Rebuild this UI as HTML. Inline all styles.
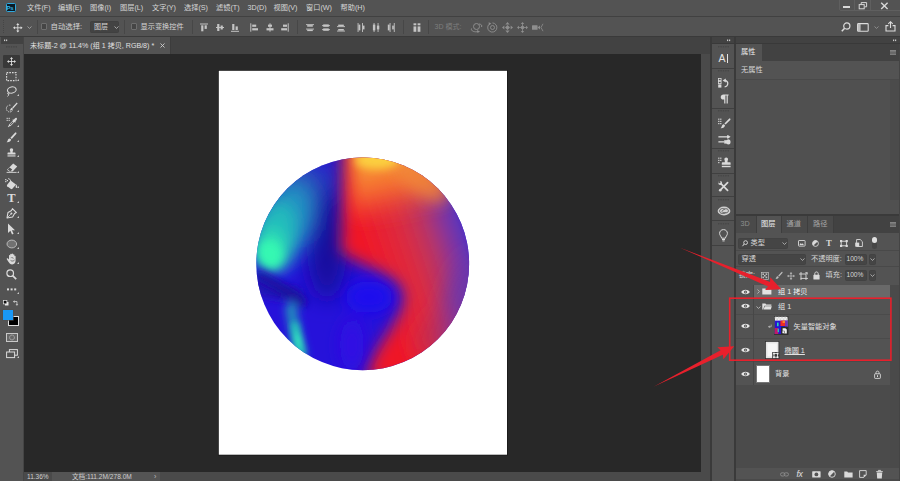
<!DOCTYPE html>
<html><head><meta charset="utf-8"><title>PS</title>
<style>
*{margin:0;padding:0;box-sizing:border-box}
html,body{width:900px;height:481px;overflow:hidden;background:#535353}
body{position:relative;font-family:"Liberation Sans","Noto Sans CJK SC",sans-serif;color:#d6d6d6;font-size:7.6px;line-height:1}
.a{position:absolute}
.t{position:absolute;white-space:nowrap;line-height:10px;height:10px}
svg{position:absolute;overflow:visible}
</style></head><body>
<!-- ===== base regions ===== -->
<div class="a" id="menubar" style="left:0;top:0;width:900px;height:16px;background:#535353"></div>
<div class="a" style="left:0;top:16px;width:900px;height:1px;background:#414141"></div>
<div class="a" id="optbar" style="left:0;top:17px;width:900px;height:19px;background:#535353"></div>
<div class="a" style="left:0;top:36px;width:900px;height:1px;background:#3a3a3a"></div>
<div class="a" id="tabbar" style="left:24px;top:37px;width:688px;height:17px;background:#424242"></div>
<div class="a" id="canvas" style="left:24px;top:54px;width:677px;height:418px;background:#282828"></div>
<div class="a" id="vscroll" style="left:701px;top:54px;width:10px;height:418px;background:#4a4a4a"></div>
<div class="a" id="status" style="left:24px;top:472px;width:688px;height:9px;background:#4a4a4a"></div>
<svg id="doc" style="left:0;top:0" width="900" height="481" viewBox="0 0 900 481"><rect x="218" y="70" width="290" height="385.600" fill="#1b1b1b"/><rect x="218.800" y="70.800" width="288.200" height="383.900" fill="#fff"/></svg>

<div class="a" style="left:0;top:37px;width:24px;height:444px;background:#535353"></div>
<div class="a" style="left:1px;top:37px;width:22px;height:7px;background:#424242"></div>
<div class="a" style="left:23px;top:37px;width:1px;height:444px;background:#454545"></div>
<div class="a" style="left:24px;top:37px;width:146px;height:17px;background:#535353"></div>
<div class="a" style="left:170px;top:37px;width:1px;height:17px;background:#3c3c3c"></div>
<!-- status -->
<div class="a" style="left:24px;top:472px;width:28px;height:9px;background:#4a4a4a"></div>
<div class="a" style="left:52px;top:472px;width:108px;height:9px;background:#545454"></div>
<div class="t" style="left:27px;top:471.700px;font-size:6.5px;color:#cfcfcf">11.36%</div>
<div class="t" style="left:72px;top:471.700px;font-size:6.6px;color:#cfcfcf">文档:111.2M/278.0M</div>
<div class="t" style="left:154px;top:471.500px;font-size:7px;color:#bdbdbd">&#x203A;</div>
<!-- right strips -->
<div class="a" style="left:710px;top:37px;width:2px;height:444px;background:#3a3a3a"></div>
<div class="a" style="left:712px;top:37px;width:22px;height:444px;background:#535353"></div>
<div class="a" style="left:734px;top:37px;width:2px;height:444px;background:#3a3a3a"></div>
<div class="a" style="left:712px;top:37px;width:22px;height:7px;background:#424242"></div>
<div class="a" style="left:736px;top:37px;width:164px;height:7px;background:#424242"></div>

<!-- circle -->
<svg style="left:0;top:0" width="900" height="481" viewBox="0 0 900 481">
<defs>
<clipPath id="cc"><circle cx="362.7" cy="263.8" r="106.4"/></clipPath>
<filter id="b12" x="-50%" y="-50%" width="200%" height="200%"><feGaussianBlur stdDeviation="11"/></filter>
<filter id="b8" x="-50%" y="-50%" width="200%" height="200%"><feGaussianBlur stdDeviation="7.5"/></filter>
<filter id="b5" x="-50%" y="-50%" width="200%" height="200%"><feGaussianBlur stdDeviation="4.5"/></filter>
<filter id="b3" x="-50%" y="-50%" width="200%" height="200%"><feGaussianBlur stdDeviation="3.2"/></filter>
<linearGradient id="rg" gradientUnits="userSpaceOnUse" x1="372" y1="262" x2="474" y2="228">
<stop offset="0" stop-color="#f01828"/><stop offset="0.36" stop-color="#dc2c40"/><stop offset="0.58" stop-color="#b83464"/><stop offset="0.76" stop-color="#8038a0"/><stop offset="0.92" stop-color="#5030c0"/><stop offset="1" stop-color="#4030c8"/>
</linearGradient>
<linearGradient id="og" gradientUnits="userSpaceOnUse" x1="380" y1="158" x2="394" y2="222">
<stop offset="0" stop-color="#f8a034" stop-opacity="1"/><stop offset="0.5" stop-color="#f66c30" stop-opacity="0.9"/><stop offset="1" stop-color="#f04030" stop-opacity="0"/>
</linearGradient>
</defs>
<g clip-path="url(#cc)">
<rect x="250" y="150" width="226" height="228" fill="#2612da"/>
<g filter="url(#b12)">
  <ellipse cx="300" cy="195" rx="36" ry="36" fill="#2c40bc"/>
  <ellipse cx="327" cy="244" rx="20" ry="56" fill="#180e9c"/>
  <ellipse cx="345" cy="168" rx="12" ry="20" fill="#2c1cb4"/>
</g>
<g filter="url(#b12)">
  <ellipse cx="285" cy="222" rx="27" ry="46" fill="#2494c2" transform="rotate(22 285 222)"/>
</g>
<g filter="url(#b8)">
  <ellipse cx="276" cy="234" rx="19" ry="32" fill="#24bcbc" transform="rotate(14 276 234)"/>
  <ellipse cx="272" cy="250" rx="16" ry="21" fill="#2ee0b4" transform="rotate(-10 272 250)"/>
</g>
<g filter="url(#b5)">
  <ellipse cx="270" cy="254" rx="12" ry="14" fill="#34f8b2" transform="rotate(-20 270 254)"/>
  <path d="M246 274L270 286L300 288L304 304L246 294Z" fill="#2216b4"/>
</g>
<g filter="url(#b5)">
  <path d="M260 276C275 284 290 292 302 302" fill="none" stroke="#1a1298" stroke-width="10" stroke-linecap="round" opacity="0.9"/>
  <path d="M291 308C293 322 296 338 301 354" fill="none" stroke="#2090bc" stroke-width="11" stroke-linecap="round"/>
</g>
<g filter="url(#b3)">
  <path d="M295 326C296 334 298 344 301 353" fill="none" stroke="#26c4bc" stroke-width="8" stroke-linecap="round"/>
  <ellipse cx="298.500" cy="341" rx="3.5" ry="9" fill="#34ecc0" transform="rotate(-12 298.500 341)"/>
</g>
<g filter="url(#b8)">
  <path d="M344 140L341 251C350 262 380 267 398 284C411 297 398 319 384 339C376 351 369 362 365 380L480 380L480 140Z" fill="url(#rg)"/>
</g>
<g filter="url(#b12)">
  <ellipse cx="466" cy="305" rx="22" ry="52" fill="#6a36ac" opacity="0.85" transform="rotate(14 466 305)"/>
  <ellipse cx="436" cy="335" rx="16" ry="26" fill="#b42c5c" opacity="0.6" transform="rotate(30 436 335)"/>
</g>
<g filter="url(#b8)">
  <path d="M352 140L450 140L450 222L352 222Z" fill="url(#og)"/>
</g>
<g filter="url(#b8)">
  <ellipse cx="421" cy="181" rx="30" ry="12" fill="#f08a3a" opacity="0.75" transform="rotate(36 421 181)"/>
</g>
<g filter="url(#b5)">
  <ellipse cx="377" cy="160" rx="22" ry="9" fill="#fcd040"/>
</g>
<g filter="url(#b8)">
  <ellipse cx="369" cy="297" rx="24" ry="16" fill="#1a0aee"/>
  <ellipse cx="352" cy="345" rx="12" ry="26" fill="#300ae4"/>
</g>
</g>
</svg>


<!-- menu -->
<div class="a" style="left:5.5px;top:2.7px;width:10px;height:9.6px;background:#0b1a26;border:1px solid #2ea9df;border-radius:1.5px"></div>
<div class="t" style="left:6.6px;top:2.8px;font-size:6px;font-weight:bold;color:#35b4ea;letter-spacing:-0.3px">Ps</div>
<div class="t" style="left:27px;top:3px;font-size:7.2px">文件(F)</div>
<div class="t" style="left:58px;top:3px;font-size:7.2px">编辑(E)</div>
<div class="t" style="left:90px;top:3px;font-size:7.2px">图像(I)</div>
<div class="t" style="left:120px;top:3px;font-size:7.2px">图层(L)</div>
<div class="t" style="left:152px;top:3px;font-size:7.2px">文字(Y)</div>
<div class="t" style="left:184px;top:3px;font-size:7.2px">选择(S)</div>
<div class="t" style="left:216px;top:3px;font-size:7.2px">滤镜(T)</div>
<div class="t" style="left:247.5px;top:3px;font-size:7.2px">3D(D)</div>
<div class="t" style="left:273.5px;top:3px;font-size:7.2px">视图(V)</div>
<div class="t" style="left:306px;top:3px;font-size:7.2px">窗口(W)</div>
<div class="t" style="left:340.5px;top:3px;font-size:7.2px">帮助(H)</div>

<div class="a" style="left:838.5px;top:-1px;width:62px;height:11.5px;border:1px solid #5f5f5f;border-radius:0 0 0 2px"></div>
<div class="a" style="left:854px;top:0;width:1px;height:10px;background:#5f5f5f"></div>
<div class="a" style="left:870px;top:0;width:1px;height:10px;background:#5f5f5f"></div>
<div class="a" style="left:843px;top:6px;width:6.5px;height:1.6px;background:#d8d8d8"></div>
<svg style="left:858px;top:1px" width="12" height="10" viewBox="0 0 12 10"><rect x="1.2" y="3.6" width="5" height="4.2" fill="none" stroke="#d8d8d8" stroke-width="1"/><path d="M3.2 3.4V1.6H8.6V5.8H6.6" fill="none" stroke="#d8d8d8" stroke-width="1"/></svg>
<svg style="left:880px;top:2px" width="9" height="8" viewBox="0 0 9 8"><path d="M1.2 0.8L7.6 7M7.6 0.8L1.2 7" stroke="#d8d8d8" stroke-width="1.4" fill="none"/></svg>


<!-- options bar -->
<svg style="left:2px;top:19px" width="4" height="16" viewBox="0 0 4 16"><g fill="#454545"><rect x="1" y="1" width="1" height="1"/><rect x="1" y="3" width="1" height="1"/><rect x="1" y="5" width="1" height="1"/><rect x="1" y="7" width="1" height="1"/><rect x="1" y="9" width="1" height="1"/><rect x="1" y="11" width="1" height="1"/><rect x="1" y="13" width="1" height="1"/></g></svg>
<svg style="left:13px;top:22.5px" width="9.600" height="9.600" viewBox="0 0 11 11"><g fill="none" stroke="#dcdcdc" stroke-width="1"><path d="M5.5 1.2V9.8M1.2 5.5H9.8"/></g><g fill="#dcdcdc"><path d="M5.5 0L7.3 2.3H3.7Z"/><path d="M5.5 11L7.3 8.7H3.7Z"/><path d="M0 5.5L2.3 3.7V7.3Z"/><path d="M11 5.5L8.7 3.7V7.3Z"/></g></svg>
<svg style="left:27px;top:26px" width="5" height="3" viewBox="0 0 5 3"><path d="M0.5 0.5L2.5 2.4L4.5 0.5" fill="none" stroke="#b0b0b0" stroke-width="0.8"/></svg>
<div class="a" style="left:37px;top:20px;width:1px;height:14px;background:#474747"></div>
<div class="a" style="left:40.5px;top:23px;width:6.5px;height:6.5px;border:1px solid #6e6e6e;border-radius:1px;background:#454545"></div>
<div class="t" style="left:50.5px;top:21.5px;font-size:7.4px">自动选择:</div>
<div class="a" style="left:90px;top:20.5px;width:29px;height:12.5px;background:#434343;border:1px solid #404040;border-radius:1.5px"></div>
<div class="t" style="left:94px;top:22px;font-size:7px">图层</div>
<svg style="left:113.5px;top:26px" width="5" height="3" viewBox="0 0 5 3"><path d="M0.5 0.5L2.5 2.4L4.5 0.5" fill="none" stroke="#c0c0c0" stroke-width="0.8"/></svg>
<div class="a" style="left:124px;top:20px;width:1px;height:14px;background:#474747"></div>
<div class="a" style="left:130.5px;top:23px;width:6.5px;height:6.5px;border:1px solid #6e6e6e;border-radius:1px;background:#454545"></div>
<div class="t" style="left:140.5px;top:21.5px;font-size:7.2px">显示变换控件</div>
<div class="a" style="left:192px;top:20px;width:1px;height:14px;background:#474747"></div>
<div class="a" style="left:297px;top:20px;width:1px;height:14px;background:#474747"></div>
<div class="a" style="left:403px;top:20px;width:1px;height:14px;background:#474747"></div>
<div class="a" style="left:428px;top:20px;width:1px;height:14px;background:#474747"></div>
<svg style="left:200px;top:22.5px" width="8" height="9" viewBox="0 0 8 9"><g fill="#c4c4c4"><rect x="0" y="0.5" width="8" height="1"/><rect x="1.2" y="2.3" width="2.2" height="6"/><rect x="4.6" y="2.3" width="2.2" height="3.6"/></g></svg>
<svg style="left:215.5px;top:22.5px" width="8" height="9" viewBox="0 0 8 9"><g fill="#c4c4c4"><rect x="0" y="4" width="8" height="1"/><rect x="1.2" y="1" width="2.2" height="7"/><rect x="4.6" y="2.5" width="2.2" height="4"/></g></svg>
<svg style="left:230.5px;top:22.5px" width="8" height="9" viewBox="0 0 8 9"><g fill="#c4c4c4"><rect x="0" y="7.8" width="8" height="1"/><rect x="1.2" y="1" width="2.2" height="6"/><rect x="4.6" y="3.4" width="2.2" height="3.6"/></g></svg>
<svg style="left:250px;top:22.5px" width="8" height="9" viewBox="0 0 8 9"><g fill="#c4c4c4"><rect x="0.3" y="0.3" width="1" height="8.4"/><rect x="2.2" y="1.6" width="4" height="2.2"/><rect x="2.2" y="5.2" width="5.8" height="2.2"/></g></svg>
<svg style="left:265.5px;top:22.5px" width="8" height="9" viewBox="0 0 8 9"><g fill="#c4c4c4"><rect x="3.5" y="0.3" width="1" height="8.4"/><rect x="2" y="1.6" width="4" height="2.2"/><rect x="0.5" y="5.2" width="7" height="2.2"/></g></svg>
<svg style="left:280.5px;top:22.5px" width="8" height="9" viewBox="0 0 8 9"><g fill="#c4c4c4"><rect x="6.7" y="0.3" width="1" height="8.4"/><rect x="2" y="1.6" width="4" height="2.2"/><rect x="0.2" y="5.2" width="5.8" height="2.2"/></g></svg>
<svg style="left:306px;top:22.5px" width="8" height="9" viewBox="0 0 8 9"><g fill="#c4c4c4"><rect x="0" y="1.2" width="8" height="0.9"/><rect x="1.2" y="2.1" width="5.6" height="1.6"/><rect x="0" y="5.6" width="8" height="0.9"/><rect x="1.2" y="6.5" width="5.6" height="1.6"/></g></svg>
<svg style="left:321.5px;top:22.5px" width="8" height="9" viewBox="0 0 8 9"><g fill="#c4c4c4"><rect x="0" y="2.2" width="8" height="0.9"/><rect x="1.2" y="1.4" width="5.6" height="2.4"/><rect x="0" y="6.2" width="8" height="0.9"/><rect x="1.2" y="5.4" width="5.6" height="2.4"/></g></svg>
<svg style="left:336.5px;top:22.5px" width="8" height="9" viewBox="0 0 8 9"><g fill="#c4c4c4"><rect x="0" y="3.2" width="8" height="0.9"/><rect x="1.2" y="1.6" width="5.6" height="1.6"/><rect x="0" y="7.6" width="8" height="0.9"/><rect x="1.2" y="6" width="5.6" height="1.6"/></g></svg>
<svg style="left:356.5px;top:22.5px" width="8" height="9" viewBox="0 0 8 9"><g fill="#c4c4c4"><rect x="0.6" y="0" width="0.9" height="9"/><rect x="1.5" y="1.6" width="1.8" height="5.8"/><rect x="5" y="0" width="0.9" height="9"/><rect x="5.9" y="2.6" width="1.6" height="3.8"/></g></svg>
<svg style="left:372px;top:22.5px" width="8" height="9" viewBox="0 0 8 9"><g fill="#c4c4c4"><rect x="1.6" y="0" width="0.9" height="9"/><rect x="0.9" y="1.6" width="2.4" height="5.8"/><rect x="5.6" y="0" width="0.9" height="9"/><rect x="4.9" y="2.6" width="2.4" height="3.8"/></g></svg>
<svg style="left:387px;top:22.5px" width="8" height="9" viewBox="0 0 8 9"><g fill="#c4c4c4"><rect x="2.6" y="0" width="0.9" height="9"/><rect x="0.8" y="1.6" width="1.8" height="5.8"/><rect x="6.8" y="0" width="0.9" height="9"/><rect x="5.2" y="2.6" width="1.6" height="3.8"/></g></svg>
<svg style="left:412.5px;top:22.5px" width="8" height="9" viewBox="0 0 8 9"><g fill="#c4c4c4"><rect x="0.5" y="0.3" width="2.8" height="2"/><rect x="4.6" y="0.3" width="2.8" height="2"/><rect x="0.5" y="3.4" width="2.8" height="5.4"/><rect x="4.6" y="3.4" width="2.8" height="5.4"/></g></svg>

<div class="t" style="left:434.5px;top:22px;font-size:7px;color:#7d7d7d">3D 模式:</div>
<!-- 3d icons -->
<svg style="left:470px;top:21.5px" width="13" height="11" viewBox="0 0 13 11"><g fill="none" stroke="#8e8e8e" stroke-width="1"><circle cx="6.5" cy="4.5" r="3"/><path d="M1.5 6.5C0.5 9 5 10.5 8 9.5M11.5 5C12.5 3.5 11 2 9 2"/></g><path d="M7 8L10 9.5L7.5 11Z" fill="#8e8e8e"/></svg>
<svg style="left:486.5px;top:21.5px" width="11" height="11" viewBox="0 0 11 11"><g fill="none" stroke="#8e8e8e" stroke-width="0.9"><path d="M3 1.5A4.6 4.6 0 1 0 5.5 0.9"/><circle cx="5.5" cy="5.5" r="2"/></g><path d="M1.6 0.2L4.4 1.6L2 3.2Z" fill="#8e8e8e"/></svg>
<svg style="left:501.5px;top:21.5px" width="11" height="11" viewBox="0 0 11 11"><g fill="#8e8e8e"><path d="M5.5 0L7.6 2.4H3.4Z"/><path d="M5.5 11L7.6 8.6H3.4Z"/><path d="M0 5.5L2.4 3.4V7.6Z"/><path d="M11 5.5L8.6 3.4V7.6Z"/><path d="M5.5 3L8 5.5L5.5 8L3 5.5Z"/></g></svg>
<svg style="left:517px;top:21.5px" width="11" height="11" viewBox="0 0 11 11"><g fill="#8e8e8e"><path d="M5.5 0L7.2 2H3.8Z"/><path d="M5.5 11L7.2 9H3.8Z"/><path d="M0 5.5L2 3.8V7.2Z"/><path d="M11 5.5L9 3.8V7.2Z"/><circle cx="5.5" cy="5.5" r="1.8"/><rect x="5.1" y="1.6" width="0.8" height="7.8"/><rect x="1.6" y="5.1" width="7.8" height="0.8"/></g></svg>
<svg style="left:531.5px;top:22.5px" width="12" height="9" viewBox="0 0 12 9"><g fill="#8e8e8e"><rect x="0" y="2.2" width="5.6" height="4.6" rx="0.6"/><path d="M5.6 4.5L8 2.6V6.4Z"/></g><path d="M11 0.8L9 4.5L11 8.2" fill="none" stroke="#8e8e8e" stroke-width="0.8"/></svg>
<!-- right icons -->
<svg style="left:840.5px;top:22px" width="10" height="10" viewBox="0 0 10 10"><circle cx="5.8" cy="4" r="3.1" fill="none" stroke="#dcdcdc" stroke-width="1.2"/><path d="M3.6 6.2L0.8 9.2" stroke="#dcdcdc" stroke-width="1.5"/></svg>
<svg style="left:856.5px;top:23px" width="12" height="9" viewBox="0 0 12 9"><rect x="0.6" y="0.6" width="10.6" height="7.6" rx="0.8" fill="none" stroke="#dcdcdc" stroke-width="1.1"/><rect x="1" y="1" width="2.6" height="7" fill="#bdbdbd"/></svg>
<svg style="left:873.5px;top:26px" width="5" height="3" viewBox="0 0 5 3"><path d="M0.5 0.5L2.5 2.4L4.5 0.5" fill="none" stroke="#9a9a9a" stroke-width="0.8"/></svg>
<svg style="left:884.5px;top:21px" width="11" height="11" viewBox="0 0 11 11"><g fill="none" stroke="#dcdcdc" stroke-width="1.1"><path d="M3.4 4.6H1V10H10V4.6H7.6"/><path d="M5.5 7V1"/><path d="M3.3 2.8L5.5 0.7L7.7 2.8"/></g></svg>


<!-- tab title -->
<div class="t" style="left:30px;top:40.5px;font-size:7.1px;color:#e0e0e0">未标题-2 @ 11.4% (组 1 拷贝, RGB/8) *</div>
<svg style="left:159.5px;top:42.5px" width="5" height="5" viewBox="0 0 5 5"><path d="M0.5 0.5L4.5 4.5M4.5 0.5L0.5 4.5" stroke="#cfcfcf" stroke-width="0.9"/></svg>
<!-- toolbar -->
<svg style="left:4px;top:39px" width="4" height="3" viewBox="0 0 4 3"><g fill="#c8c8c8"><rect x="0" y="0.5" width="1.2" height="1.6"/><rect x="2" y="0.5" width="1.2" height="1.6"/></g></svg>
<svg style="left:6px;top:46px" width="12" height="2" viewBox="0 0 12 2"><g fill="#474747"><rect x="0" y="0" width="1.4" height="1.6"/><rect x="2.4" y="0" width="1.4" height="1.6"/><rect x="4.8" y="0" width="1.4" height="1.6"/><rect x="7.2" y="0" width="1.4" height="1.6"/><rect x="9.6" y="0" width="1.4" height="1.6"/></g></svg>
<div class="a" style="left:3px;top:55px;width:17px;height:13px;background:#383838;border-radius:1px"></div>
<!-- move -->
<svg style="left:6.7px;top:56.8px" width="9" height="9" viewBox="0 0 11 11"><g fill="none" stroke="#dadada" stroke-width="1.1"><path d="M5.5 1.2V9.8M1.2 5.5H9.8"/></g><g fill="#dadada"><path d="M5.5 0L7.4 2.4H3.6Z"/><path d="M5.5 11L7.4 8.6H3.6Z"/><path d="M0 5.5L2.4 3.6V7.4Z"/><path d="M11 5.5L8.6 3.6V7.4Z"/></g></svg>
<!-- marquee -->
<svg style="left:6.2px;top:71.600px" width="11" height="9" viewBox="0 0 11 9"><rect x="0.6" y="0.6" width="9.4" height="8" fill="none" stroke="#dadada" stroke-width="1.1" stroke-dasharray="1.6 1.1"/></svg>
<!-- lasso -->
<svg style="left:6px;top:86.400px" width="11" height="11" viewBox="0 0 11 11"><ellipse cx="5.8" cy="4" rx="4.4" ry="3.1" fill="none" stroke="#dadada" stroke-width="1.1" transform="rotate(-12 5.8 4)"/><path d="M2.4 6.4C1.2 7 1.6 8.6 2.8 8.4C3.6 8.2 3.2 7 2.4 7.2M2.6 8.4C2.8 9.4 2.2 10 1.4 10.4" fill="none" stroke="#dadada" stroke-width="0.9"/></svg>
<!-- quick select -->
<svg style="left:5.5px;top:101.5px" width="12" height="11" viewBox="0 0 12 11"><path d="M4.4 3.2A3.4 3.4 0 1 0 6.6 8.4" fill="none" stroke="#dadada" stroke-width="1" stroke-dasharray="1.4 0.9"/><path d="M10.8 0.6L6.2 5.4L7.2 6.4L11.6 1.4Z" fill="#dadada"/><path d="M5.8 5.8C4.6 6.2 4.6 7.8 3.6 8.4C5.2 8.8 6.8 8 7 6.8Z" fill="#dadada"/></svg>
<!-- eyedropper -->
<svg style="left:5.5px;top:116.5px" width="12" height="11" viewBox="0 0 12 11"><path d="M10.400 0.800C11.300 1.500 11.100 2.500 10.400 3.200L9.300 4.300L9.900 4.900L9.200 5.600L8.500 5L4.600 8.900L3 9.500L2.300 10.200L1.800 9.700L2.500 9L3.100 7.400L7 3.500L6.400 2.900L7.100 2.200L7.700 2.800L8.800 1.600C9.300 1 9.900 0.500 10.400 0.800Z" fill="#dadada"/><path d="M3.800 7.600L6.800 4.600L7.400 5.200L4.400 8.200Z" fill="#535353"/><g fill="#c8c8c8"><rect x="0.6" y="0.800" width="1.200" height="1.200"/><rect x="2.600" y="0.800" width="1.200" height="1.200"/><rect x="0.600" y="2.800" width="1.200" height="1.200"/><rect x="2.600" y="2.800" width="1.200" height="1.200"/></g></svg>
<!-- brush -->
<svg style="left:6px;top:131.5px" width="11" height="11" viewBox="0 0 11 11"><path d="M10 0.4C10.6 0.8 10.6 1.4 10.2 2L5.8 7L4.4 5.8L9 0.8C9.4 0.4 9.8 0.2 10 0.4Z" fill="#dadada"/><path d="M3.8 6.4L5.2 7.6C5 9.4 3 10.4 0.6 10.2C1.8 9.4 1.6 8.4 2 7.6C2.4 6.8 3 6.4 3.8 6.4Z" fill="#dadada"/></svg>
<!-- stamp -->
<svg style="left:6.8px;top:148px" width="9" height="9" viewBox="0 0 11 11"><path d="M5.5 0.4C6.9 0.4 7.7 1.4 7.5 2.6C7.3 3.6 6.7 4.2 6.9 5.4H9.6C10.2 5.4 10.4 5.8 10.4 6.4V8H0.6V6.4C0.6 5.8 0.8 5.4 1.4 5.4H4.1C4.3 4.2 3.7 3.6 3.5 2.6C3.3 1.4 4.1 0.4 5.5 0.4Z" fill="#dadada"/><rect x="0.6" y="9" width="9.8" height="1.4" fill="#dadada"/></svg>
<!-- eraser -->
<svg style="left:5.5px;top:163px" width="12" height="10" viewBox="0 0 12 10"><path d="M7.2 0.6L11.2 3.6L6.6 8.6H3.2L1 6.8Z" fill="#dadada"/><path d="M1.8 6.6L4.4 8.4L6.2 6.4L3.6 4.6Z" fill="#535353"/><path d="M0.6 9.4H10.6" stroke="#dadada" stroke-width="0.9"/></svg>
<!-- bucket -->
<svg style="left:5px;top:177.5px" width="13" height="12" viewBox="0 0 13 12"><path d="M5.6 2.4L11 6.4L7.4 10.8C7 11.2 6.4 11.2 6 11L2.2 8.2C1.8 7.8 1.8 7.4 2 7Z" fill="#dadada"/><path d="M3 0.8C4.2 0.2 5.4 1.6 5.8 3.4" fill="none" stroke="#dadada" stroke-width="0.9"/><path d="M11 6.2C11.8 7.4 12.6 8.4 12.2 9.4C11.8 10.2 10.6 10 10.6 9C10.6 8 10.8 7.2 11 6.2Z" fill="#dadada"/><g fill="#dadada"><rect x="0.2" y="1" width="1.2" height="1.2"/><rect x="0.2" y="3" width="1.2" height="1.2"/><rect x="1.8" y="2" width="1.2" height="1.2"/></g></svg>
<!-- T -->
<div class="t" style="left:7.2px;top:191.600px;font-size:12.5px;line-height:13px;height:13px;font-weight:bold;font-family:'Liberation Serif',serif;color:#dadada">T</div>
<!-- pen -->
<svg style="left:6px;top:207.5px" width="11" height="11" viewBox="0 0 11 11"><path d="M6.4 0.6L10.4 4.6L8.6 5.4L6.6 9L1 10L2 4.4L5.6 2.4Z" fill="none" stroke="#dadada" stroke-width="1.1" stroke-linejoin="round"/><circle cx="5.4" cy="5.6" r="1" fill="#dadada"/><path d="M1.2 9.8L4.8 6.2" stroke="#dadada" stroke-width="0.8"/></svg>
<!-- path select arrow -->
<svg style="left:7px;top:223px" width="9" height="12" viewBox="0 0 9 12"><path d="M1 0.6L8 7.2H4.9L6.6 10.8L5 11.5L3.4 7.8L1 10Z" fill="#dadada"/></svg>
<!-- ellipse -->
<svg style="left:5.5px;top:238.5px" width="12" height="10" viewBox="0 0 12 10"><ellipse cx="5.8" cy="5" rx="4.8" ry="3.9" fill="#717171" stroke="#c2c2c2" stroke-width="0.9"/></svg>
<!-- hand -->
<svg style="left:5.5px;top:253px" width="12" height="12" viewBox="0 0 12 12"><path d="M3 6.4V2.6C3 1.8 4.2 1.8 4.2 2.6V1.4C4.2 0.6 5.6 0.6 5.6 1.4V1C5.6 0.2 7 0.2 7 1V1.8C7 1 8.4 1 8.4 1.8V3.4C8.4 2.6 9.6 2.6 9.6 3.4V7.6C9.6 9.8 8.4 11.4 6.2 11.4C4.4 11.4 3.4 10.4 2.4 8.8L0.8 6.2C0.4 5.4 1.4 4.8 2 5.4Z" fill="#dadada"/><path d="M4 5.2C5 4 7.4 4.2 8.2 5.6C7.2 5 5.2 4.8 4 5.2Z" fill="#535353"/><path d="M4.6 7.4C5.8 8.4 7.6 8.2 8.6 7" fill="none" stroke="#535353" stroke-width="0.8"/></svg>
<!-- zoom -->
<svg style="left:6px;top:268.5px" width="11" height="11" viewBox="0 0 11 11"><circle cx="4.2" cy="4.2" r="3.3" fill="none" stroke="#dadada" stroke-width="1.2"/><path d="M6.6 6.6L10.2 10.2" stroke="#dadada" stroke-width="1.7"/></svg>
<!-- dots -->
<svg style="left:6.5px;top:287.800px" width="10" height="3" viewBox="0 0 10 3"><g fill="#dadada"><rect x="0" y="0.4" width="2" height="2"/><rect x="3.6" y="0.4" width="2" height="2"/><rect x="7.2" y="0.4" width="2" height="2"/></g></svg>
<!-- default colors / swap -->
<svg style="left:2.8px;top:300.200px" width="6.2" height="6.2" viewBox="0 0 7 7"><rect x="2.2" y="2.2" width="4" height="4" fill="#e8e8e8"/><rect x="0.4" y="0.4" width="4" height="4" fill="#111" stroke="#e8e8e8" stroke-width="0.8"/></svg>
<svg style="left:13px;top:300.200px" width="6" height="6" viewBox="0 0 7 7"><path d="M1.4 1.8H4.6V5" fill="none" stroke="#dadada" stroke-width="0.9"/><path d="M0 1.8L1.8 0.2V3.4Z" fill="#dadada"/><path d="M4.6 6.8L3 5H6.2Z" fill="#dadada"/></svg>
<div class="a" style="left:8.300px;top:315.500px;width:10.700px;height:10.500px;background:#000;border:0.8px solid #e0e0e0"></div>
<div class="a" style="left:2.600px;top:310px;width:10.600px;height:10.300px;background:#1a98f6;box-shadow:0 0 0 0.6px #4f4f4f"></div>
<!-- quick mask -->
<svg style="left:5.5px;top:332.5px" width="12" height="9" viewBox="0 0 12 9"><rect x="0.5" y="0.5" width="11" height="8" fill="#676767" stroke="#c8c8c8" stroke-width="1"/><circle cx="6" cy="4.5" r="2.4" fill="none" stroke="#c8c8c8" stroke-width="0.9" stroke-dasharray="1.2 0.7"/></svg>
<!-- screen mode -->
<svg style="left:5.5px;top:348.5px" width="12" height="10" viewBox="0 0 12 10"><rect x="3.4" y="0.6" width="8" height="5.6" fill="#535353" stroke="#dadada" stroke-width="1"/><rect x="0.6" y="3" width="8" height="5.6" fill="#535353" stroke="#dadada" stroke-width="1"/></svg>

<svg style="left:17.3px;top:79.0px" width="2" height="2" viewBox="0 0 2 2"><path d="M2 0V2H0Z" fill="#c8c8c8"/></svg>
<svg style="left:17.3px;top:94.0px" width="2" height="2" viewBox="0 0 2 2"><path d="M2 0V2H0Z" fill="#c8c8c8"/></svg>
<svg style="left:17.3px;top:109.9px" width="2" height="2" viewBox="0 0 2 2"><path d="M2 0V2H0Z" fill="#c8c8c8"/></svg>
<svg style="left:17.3px;top:124.9px" width="2" height="2" viewBox="0 0 2 2"><path d="M2 0V2H0Z" fill="#c8c8c8"/></svg>
<svg style="left:17.3px;top:139.9px" width="2" height="2" viewBox="0 0 2 2"><path d="M2 0V2H0Z" fill="#c8c8c8"/></svg>
<svg style="left:17.3px;top:154.9px" width="2" height="2" viewBox="0 0 2 2"><path d="M2 0V2H0Z" fill="#c8c8c8"/></svg>
<svg style="left:17.3px;top:170.7px" width="2" height="2" viewBox="0 0 2 2"><path d="M2 0V2H0Z" fill="#c8c8c8"/></svg>
<svg style="left:17.3px;top:185.7px" width="2" height="2" viewBox="0 0 2 2"><path d="M2 0V2H0Z" fill="#c8c8c8"/></svg>
<svg style="left:17.3px;top:201.2px" width="2" height="2" viewBox="0 0 2 2"><path d="M2 0V2H0Z" fill="#c8c8c8"/></svg>
<svg style="left:17.3px;top:215.7px" width="2" height="2" viewBox="0 0 2 2"><path d="M2 0V2H0Z" fill="#c8c8c8"/></svg>
<svg style="left:17.3px;top:231.5px" width="2" height="2" viewBox="0 0 2 2"><path d="M2 0V2H0Z" fill="#c8c8c8"/></svg>
<svg style="left:17.3px;top:246.5px" width="2" height="2" viewBox="0 0 2 2"><path d="M2 0V2H0Z" fill="#c8c8c8"/></svg>
<svg style="left:17.3px;top:261.9px" width="2" height="2" viewBox="0 0 2 2"><path d="M2 0V2H0Z" fill="#c8c8c8"/></svg>
<svg style="left:17.3px;top:292.0px" width="2" height="2" viewBox="0 0 2 2"><path d="M2 0V2H0Z" fill="#c8c8c8"/></svg>
<svg style="left:17.3px;top:355.5px" width="2" height="2" viewBox="0 0 2 2"><path d="M2 0V2H0Z" fill="#c8c8c8"/></svg>
<!-- right icon strip -->
<svg style="left:726.5px;top:39px" width="4" height="3" viewBox="0 0 4 3"><g fill="#c8c8c8"><rect x="0" y="0.5" width="1.2" height="1.6"/><rect x="2" y="0.5" width="1.2" height="1.6"/></g></svg>
<svg style="left:892.5px;top:39px" width="4" height="3" viewBox="0 0 4 3"><g fill="#c8c8c8"><rect x="0" y="0.5" width="1.2" height="1.6"/><rect x="2" y="0.5" width="1.2" height="1.6"/></g></svg>
<div class="a" style="left:712px;top:67.5px;width:22px;height:1px;background:#404040"></div>
<div class="a" style="left:712px;top:108px;width:22px;height:1px;background:#404040"></div>
<div class="a" style="left:712px;top:147.5px;width:22px;height:1px;background:#404040"></div>
<div class="a" style="left:712px;top:172.5px;width:22px;height:1px;background:#404040"></div>
<div class="a" style="left:712px;top:196px;width:22px;height:1px;background:#404040"></div>
<div class="a" style="left:712px;top:220px;width:22px;height:1px;background:#404040"></div>
<div class="a" style="left:712px;top:244.5px;width:22px;height:1px;background:#404040"></div>
<svg style="left:717.5px;top:46px" width="12" height="2" viewBox="0 0 12 2"><g fill="#474747"><rect x="0" y="0" width="1.4" height="1.4"/><rect x="2.4" y="0" width="1.4" height="1.4"/><rect x="4.8" y="0" width="1.4" height="1.4"/><rect x="7.2" y="0" width="1.4" height="1.4"/><rect x="9.6" y="0" width="1.4" height="1.4"/></g></svg>
<svg style="left:717.5px;top:70px" width="12" height="2" viewBox="0 0 12 2"><g fill="#474747"><rect x="0" y="0" width="1.4" height="1.4"/><rect x="2.4" y="0" width="1.4" height="1.4"/><rect x="4.8" y="0" width="1.4" height="1.4"/><rect x="7.2" y="0" width="1.4" height="1.4"/><rect x="9.6" y="0" width="1.4" height="1.4"/></g></svg>
<svg style="left:717.5px;top:110px" width="12" height="2" viewBox="0 0 12 2"><g fill="#474747"><rect x="0" y="0" width="1.4" height="1.4"/><rect x="2.4" y="0" width="1.4" height="1.4"/><rect x="4.8" y="0" width="1.4" height="1.4"/><rect x="7.2" y="0" width="1.4" height="1.4"/><rect x="9.6" y="0" width="1.4" height="1.4"/></g></svg>
<svg style="left:717.5px;top:150px" width="12" height="2" viewBox="0 0 12 2"><g fill="#474747"><rect x="0" y="0" width="1.4" height="1.4"/><rect x="2.4" y="0" width="1.4" height="1.4"/><rect x="4.8" y="0" width="1.4" height="1.4"/><rect x="7.2" y="0" width="1.4" height="1.4"/><rect x="9.6" y="0" width="1.4" height="1.4"/></g></svg>
<svg style="left:717.5px;top:175px" width="12" height="2" viewBox="0 0 12 2"><g fill="#474747"><rect x="0" y="0" width="1.4" height="1.4"/><rect x="2.4" y="0" width="1.4" height="1.4"/><rect x="4.8" y="0" width="1.4" height="1.4"/><rect x="7.2" y="0" width="1.4" height="1.4"/><rect x="9.6" y="0" width="1.4" height="1.4"/></g></svg>
<svg style="left:717.5px;top:198.5px" width="12" height="2" viewBox="0 0 12 2"><g fill="#474747"><rect x="0" y="0" width="1.4" height="1.4"/><rect x="2.4" y="0" width="1.4" height="1.4"/><rect x="4.8" y="0" width="1.4" height="1.4"/><rect x="7.2" y="0" width="1.4" height="1.4"/><rect x="9.6" y="0" width="1.4" height="1.4"/></g></svg>
<svg style="left:717.5px;top:222.5px" width="12" height="2" viewBox="0 0 12 2"><g fill="#474747"><rect x="0" y="0" width="1.4" height="1.4"/><rect x="2.4" y="0" width="1.4" height="1.4"/><rect x="4.8" y="0" width="1.4" height="1.4"/><rect x="7.2" y="0" width="1.4" height="1.4"/><rect x="9.6" y="0" width="1.4" height="1.4"/></g></svg>

<div class="t" style="left:718.5px;top:52.5px;font-size:10.5px;line-height:11px;height:11px;color:#e4e4e4">A</div>
<div class="a" style="left:727px;top:53.5px;width:1px;height:9.5px;background:#e4e4e4"></div>
<!-- history -->
<svg style="left:718px;top:77.5px" width="12" height="10" viewBox="0 0 12 10"><g fill="none" stroke="#dadada" stroke-width="0.8"><rect x="0.5" y="0.4" width="2.6" height="2.2"/><rect x="0.5" y="3.4" width="2.6" height="2.2"/></g><rect x="0.2" y="6.4" width="3.2" height="3.2" fill="#dadada"/><path d="M6.6 9C10.6 8 11 3.4 7 2.4" fill="none" stroke="#dadada" stroke-width="1.2"/><path d="M4.6 2.6L7.8 0.4V4.6Z" fill="#dadada"/></svg>
<!-- paragraph -->
<svg style="left:719.5px;top:94px" width="9" height="10" viewBox="0 0 9 10"><path d="M3.6 0.4H8.6V1.6H7.8V9.6H6.6V1.6H5.4V9.6H4.2V5.6H3.6C-0.2 5.6 -0.2 0.4 3.6 0.4Z" fill="#dadada"/></svg>
<!-- brush settings -->
<svg style="left:717.5px;top:117.5px" width="13" height="11" viewBox="0 0 13 11"><g fill="#dadada"><rect x="0.2" y="0.6" width="1.2" height="1.2"/><rect x="0.2" y="2.8" width="1.2" height="1.2"/><rect x="0.2" y="5" width="1.2" height="1.2"/><rect x="2.2" y="0.6" width="1.2" height="1.2"/><rect x="2.2" y="2.8" width="1.2" height="1.2"/><rect x="2.2" y="5" width="1.2" height="1.2"/><path d="M12 0.4C12.6 0.8 12.6 1.4 12.2 2L7.6 6.6L6.4 5.6L11 0.8C11.4 0.4 11.8 0.2 12 0.4Z"/><path d="M5.8 6.2L7 7.2C6.8 9.2 5 10.4 2.6 10.2C3.8 9.4 3.6 8.2 4.2 7.2C4.6 6.6 5.2 6.2 5.8 6.2Z"/></g></svg>
<!-- brushes -->
<svg style="left:717.5px;top:134.5px" width="13" height="10" viewBox="0 0 13 10"><g fill="#dadada"><rect x="0.4" y="1.2" width="9" height="1.3"/><path d="M9 0.2H10.2L12.6 1.8L10.2 3.6H9Z"/><rect x="0.4" y="6.2" width="6" height="1.3"/><path d="M6.2 5.2H9V8.6H6.2Z"/><ellipse cx="10.4" cy="6.9" rx="2.2" ry="2.6"/></g></svg>
<!-- clone source -->
<svg style="left:717.5px;top:157px" width="13" height="11" viewBox="0 0 13 11"><g fill="#dadada"><rect x="0.2" y="0.6" width="1.2" height="1.2"/><rect x="0.2" y="2.8" width="1.2" height="1.2"/><rect x="0.2" y="5" width="1.2" height="1.2"/><rect x="2.2" y="0.6" width="1.2" height="1.2"/><rect x="2.2" y="2.8" width="1.2" height="1.2"/><path d="M8.2 0.4C9.6 0.4 10.2 1.4 10 2.4C9.8 3.4 9.4 4 9.6 5.2H11.8C12.4 5.2 12.6 5.6 12.6 6.2V7.8H3.8V6.2C3.8 5.6 4 5.2 4.6 5.2H6.8C7 4 6.6 3.4 6.4 2.4C6.2 1.4 6.8 0.4 8.2 0.4Z"/><rect x="3.8" y="8.8" width="8.8" height="1.4"/></g></svg>
<!-- tools (wrench cross) -->
<svg style="left:717.5px;top:181px" width="12" height="11" viewBox="0 0 12 11"><g stroke="#dadada" stroke-width="1.7" stroke-linecap="round"><path d="M2.4 2.2L9.6 9.4"/><path d="M9.6 1.6L2.2 9.2"/></g><circle cx="2.2" cy="2" r="1.9" fill="#dadada"/><circle cx="1.4" cy="1.2" r="1.1" fill="#535353"/><circle cx="2.2" cy="9.2" r="1.3" fill="#dadada"/></svg>
<!-- CC -->
<svg style="left:717px;top:205.5px" width="14" height="10" viewBox="0 0 14 10"><ellipse cx="7" cy="5" rx="6.4" ry="4.4" fill="#cfcfcf"/><g fill="none" stroke="#535353" stroke-width="0.9"><path d="M8.6 6.6C5.8 8.6 2.4 7.2 2.6 4.8C2.8 2.6 6 1.8 8 3.4"/><path d="M5.4 6.2C7 7.2 11.400000000000001 7.4 11.4 4.8C11.4 2.8 8.6 2 6.8 3.6L4.6 5.6"/></g></svg>
<!-- bulb -->
<svg style="left:719px;top:228.500px" width="9" height="13" viewBox="0 0 9 13"><path d="M4.5 0.6C7 0.6 8.4 2.4 8.4 4.4C8.4 6.4 6.6 7.4 6.4 9.200000000000001H2.6C2.4 7.4 0.6 6.4 0.6 4.4C0.6 2.4 2 0.6 4.5 0.6Z" fill="none" stroke="#dadada" stroke-width="1"/><rect x="3" y="10" width="3" height="1" fill="#dadada"/><rect x="3.4" y="11.4" width="2.2" height="1" fill="#dadada"/></svg>

<!-- properties -->
<div class="a" style="left:736px;top:44px;width:164px;height:17px;background:#424242"></div>
<div class="a" style="left:736px;top:44px;width:25.5px;height:17px;background:#535353"></div>
<div class="t" style="left:741px;top:47px;font-size:7.2px;color:#ededed">属性</div>
<svg style="left:889.5px;top:50px" width="6" height="5" viewBox="0 0 6 5"><g fill="#8c8c8c"><rect y="0" width="6" height="0.9"/><rect y="1.3" width="6" height="0.9"/><rect y="2.6" width="6" height="0.9"/><rect y="3.9" width="6" height="0.9"/></g></svg>
<div class="a" style="left:736px;top:61px;width:164px;height:153px;background:#535353"></div>
<div class="t" style="left:741px;top:65px;font-size:7.2px;color:#d8d8d8">无属性</div>
<div class="a" style="left:736px;top:79px;width:164px;height:1px;background:#494949"></div>
<div class="a" style="left:736px;top:80px;width:164px;height:134px;background:#505050"></div>
<div class="a" style="left:890px;top:80px;width:9px;height:120px;background:#4b4b4b"></div>
<div class="a" style="left:736px;top:214px;width:164px;height:2px;background:#3a3a3a"></div>

<!-- layers -->
<div class="a" style="left:736px;top:216px;width:164px;height:16.5px;background:#424242"></div>
<div class="a" style="left:736px;top:216px;width:97px;height:16.5px;background:#4a4a4a"></div>
<div class="a" style="left:756px;top:216px;width:25px;height:16.5px;background:#535353"></div>
<div class="a" style="left:755.5px;top:216px;width:0.8px;height:16.5px;background:#3e3e3e"></div>
<div class="a" style="left:781px;top:216px;width:0.8px;height:16.5px;background:#3e3e3e"></div>
<div class="a" style="left:807px;top:216px;width:0.8px;height:16.5px;background:#3e3e3e"></div>
<div class="a" style="left:833px;top:216px;width:0.8px;height:16.5px;background:#3e3e3e"></div>
<div class="t" style="left:740.5px;top:219px;font-size:7.2px;color:#8f8f8f">3D</div>
<div class="t" style="left:761px;top:219px;font-size:7.2px;color:#f0f0f0">图层</div>
<div class="t" style="left:786.5px;top:219px;font-size:7.2px;color:#a6a6a6">通道</div>
<div class="t" style="left:813px;top:219px;font-size:7.2px;color:#a6a6a6">路径</div>
<svg style="left:889.5px;top:221.5px" width="6" height="5" viewBox="0 0 6 5"><g fill="#8c8c8c"><rect y="0" width="6" height="0.9"/><rect y="1.3" width="6" height="0.9"/><rect y="2.6" width="6" height="0.9"/><rect y="3.9" width="6" height="0.9"/></g></svg>
<div class="a" style="left:736px;top:232.500px;width:164px;height:52px;background:#535353"></div>
<div class="a" style="left:736px;top:250px;width:163px;height:1px;background:#494949"></div>
<div class="a" style="left:736px;top:266px;width:163px;height:1px;background:#494949"></div>
<!-- filter row -->
<div class="a" style="left:738px;top:237.500px;width:49.5px;height:11.5px;background:#454545;border:1px solid #424242;border-radius:1.5px"></div>
<svg style="left:741.5px;top:240px" width="6" height="7" viewBox="0 0 6 7"><circle cx="3.6" cy="2.6" r="1.9" fill="none" stroke="#dadada" stroke-width="0.9"/><path d="M2.2 4L0.5 6.2" stroke="#dadada" stroke-width="1"/></svg>
<div class="t" style="left:750.5px;top:238.200px;font-size:7.2px">类型</div>
<svg style="left:781.5px;top:242.3px" width="5" height="3" viewBox="0 0 5 3"><path d="M0.5 0.5L2.5 2.4L4.5 0.5" fill="none" stroke="#c0c0c0" stroke-width="0.8"/></svg>

<svg style="left:798px;top:239.500px" width="8" height="7" viewBox="0 0 8 7"><rect x="0.5" y="0.5" width="6.6" height="5.6" rx="0.6" fill="none" stroke="#dadada" stroke-width="0.9"/><path d="M1.4 5L2.8 3L3.8 4.2L4.8 3.2L5.8 5Z" fill="#dadada"/></svg>
<svg style="left:812px;top:239.500px" width="7" height="7" viewBox="0 0 7 7"><circle cx="3.5" cy="3.5" r="2.9" fill="none" stroke="#dadada" stroke-width="0.9"/><path d="M5.6 1.4A2.9 2.9 0 0 0 1.4 5.6Z" fill="#dadada"/></svg>
<div class="t" style="left:826px;top:238px;font-size:8.6px;line-height:10px;font-family:'Liberation Serif',serif;font-weight:bold;color:#dadada">T</div>
<svg style="left:839.5px;top:239.500px" width="8" height="7" viewBox="0 0 8 7"><rect x="1.2" y="1.2" width="5.4" height="4.6" fill="none" stroke="#dadada" stroke-width="0.9"/><g fill="#dadada"><rect x="0" y="0" width="2.2" height="2.2"/><rect x="5.6" y="0" width="2.2" height="2.2"/><rect x="0" y="4.800000000000001" width="2.2" height="2.2"/><rect x="5.6" y="4.800000000000001" width="2.2" height="2.2"/></g></svg>
<svg style="left:854.5px;top:239px" width="8" height="8" viewBox="0 0 8 8"><path d="M1.6 0.5H5.2L7.4 2.7V7.5H1.6Z" fill="none" stroke="#dadada" stroke-width="0.9"/><rect x="0.2" y="3.6" width="4" height="4" fill="#dadada"/></svg>
<div class="a" style="left:871.5px;top:238px;width:5.5px;height:10.5px;border-radius:2.8px;background:#464646"></div>
<div class="a" style="left:871.5px;top:237.300px;width:5.5px;height:5.5px;border-radius:3px;background:#e0e0e0"></div>
<!-- blend row -->
<div class="a" style="left:738px;top:253.500px;width:67.5px;height:11px;background:#454545;border:1px solid #424242;border-radius:1.5px"></div>
<div class="t" style="left:741.5px;top:254px;font-size:7.2px">穿透</div>
<svg style="left:799.5px;top:258px" width="5" height="3" viewBox="0 0 5 3"><path d="M0.5 0.5L2.5 2.4L4.5 0.5" fill="none" stroke="#c0c0c0" stroke-width="0.8"/></svg>

<div class="t" style="left:811px;top:254px;font-size:7.2px">不透明度:</div>
<div class="a" style="left:844.5px;top:253.500px;width:22.5px;height:11px;background:#454545;border:1px solid #424242;border-radius:1.5px"></div>
<div class="t" style="left:846.5px;top:254.300px;font-size:6.6px">100%</div>
<div class="a" style="left:868.5px;top:253.500px;width:7.5px;height:11px;background:#454545;border:1px solid #424242;border-radius:1.5px"></div>
<svg style="left:869.8px;top:258px" width="5" height="3" viewBox="0 0 5 3"><path d="M0.5 0.5L2.5 2.4L4.5 0.5" fill="none" stroke="#c0c0c0" stroke-width="0.8"/></svg>

<!-- lock row -->
<div class="t" style="left:738.5px;top:270px;font-size:7.2px">锁定:</div>
<svg style="left:761px;top:272px" width="8" height="8" viewBox="0 0 8 8"><rect x="0.4" y="0.4" width="7" height="7" fill="none" stroke="#bdbdbd" stroke-width="0.7"/><g fill="#bdbdbd"><rect x="1.4" y="1.4" width="1.6" height="1.6"/><rect x="4.6" y="1.4" width="1.6" height="1.6"/><rect x="3" y="3" width="1.6" height="1.6"/><rect x="1.4" y="4.6" width="1.6" height="1.6"/><rect x="4.6" y="4.6" width="1.6" height="1.6"/></g></svg>
<svg style="left:774.5px;top:271px" width="8" height="9" viewBox="0 0 11 11"><path d="M10 0.4C10.6 0.8 10.6 1.4 10.2 2L5.8 7L4.4 5.8L9 0.8C9.4 0.4 9.8 0.2 10 0.4Z" fill="#bdbdbd"/><path d="M3.8 6.4L5.2 7.6C5 9.4 3 10.4 0.6 10.2C1.8 9.4 1.6 8.4 2 7.6C2.400000000000002 6.8 3 6.4 3.8 6.4Z" fill="#bdbdbd"/></svg>
<svg style="left:787px;top:272px" width="8" height="8" viewBox="0 0 11 11"><g fill="none" stroke="#bdbdbd" stroke-width="1"><path d="M5.5 1.2V9.8M1.2 5.5H9.8"/></g><g fill="#bdbdbd"><path d="M5.5 0L7.3 2.3H3.7Z"/><path d="M5.5 11L7.3 8.7H3.7Z"/><path d="M0 5.5L2.3 3.7V7.3Z"/><path d="M11 5.5L8.7 3.7V7.3Z"/></g></svg>
<svg style="left:798.5px;top:271.500px" width="9" height="8" viewBox="0 0 9 8"><g fill="none" stroke="#dadada" stroke-width="0.9"><path d="M2 0V8M0 2H7M7 1.6V8M1.6 6.4H9"/></g><path d="M6 0.2L8.6 0.2L8.6 2.8Z" fill="#dadada"/></svg>
<svg style="left:813px;top:271px" width="7" height="9" viewBox="0 0 7 9"><path d="M1.8 4V2.6C1.8 0.4 5.2 0.4 5.2 2.6V4" fill="none" stroke="#dadada" stroke-width="1"/><rect x="0.4" y="3.8" width="6.2" height="4.8" rx="0.6" fill="#dadada"/></svg>
<div class="t" style="left:825.5px;top:270px;font-size:7.2px">填充:</div>
<div class="a" style="left:844.5px;top:269.500px;width:22.5px;height:11px;background:#454545;border:1px solid #424242;border-radius:1.5px"></div>
<div class="t" style="left:846.5px;top:270.300px;font-size:6.6px">100%</div>
<div class="a" style="left:868.5px;top:269.500px;width:7.5px;height:11px;background:#454545;border:1px solid #424242;border-radius:1.5px"></div>
<svg style="left:869.8px;top:274px" width="5" height="3" viewBox="0 0 5 3"><path d="M0.5 0.5L2.5 2.4L4.5 0.5" fill="none" stroke="#c0c0c0" stroke-width="0.8"/></svg>

<!-- list -->
<div class="a" style="left:736px;top:284.500px;width:164px;height:183.5px;background:#4b4b4b"></div>
<div class="a" style="left:890px;top:284.500px;width:9px;height:183.5px;background:#4a4a4a"></div>
<div class="a" style="left:736px;top:284.500px;width:154px;height:13.5px;background:#535353"></div>
<div class="a" style="left:753.5px;top:284.500px;width:136.5px;height:13.5px;background:#696969"></div>
<div class="a" style="left:736px;top:298.500px;width:154px;height:15.5px;background:#535353"></div>
<div class="a" style="left:736px;top:314.500px;width:154px;height:23.5px;background:#535353"></div>
<div class="a" style="left:736px;top:338.500px;width:154px;height:22.5px;background:#535353"></div>
<div class="a" style="left:736px;top:361.500px;width:154px;height:23.5px;background:#535353"></div>
<div class="a" style="left:753px;top:284.500px;width:0.7px;height:100.5px;background:#474747"></div>
<svg style="left:740.5px;top:289.0px" width="9" height="6" viewBox="0 0 9 6"><path d="M0.2 3C2 0 7 0 8.8 3C7 6 2 6 0.2 3Z" fill="#e6e6e6"/><circle cx="4.5" cy="3" r="1.5" fill="#4d4d4d"/><circle cx="4.5" cy="3" r="0.6" fill="#e6e6e6"/></svg>
<svg style="left:740.5px;top:303.4px" width="9" height="6" viewBox="0 0 9 6"><path d="M0.2 3C2 0 7 0 8.8 3C7 6 2 6 0.2 3Z" fill="#e6e6e6"/><circle cx="4.5" cy="3" r="1.5" fill="#4d4d4d"/><circle cx="4.5" cy="3" r="0.6" fill="#e6e6e6"/></svg>
<svg style="left:740.5px;top:323.0px" width="9" height="6" viewBox="0 0 9 6"><path d="M0.2 3C2 0 7 0 8.8 3C7 6 2 6 0.2 3Z" fill="#e6e6e6"/><circle cx="4.5" cy="3" r="1.5" fill="#4d4d4d"/><circle cx="4.5" cy="3" r="0.6" fill="#e6e6e6"/></svg>
<svg style="left:740.5px;top:346.5px" width="9" height="6" viewBox="0 0 9 6"><path d="M0.2 3C2 0 7 0 8.8 3C7 6 2 6 0.2 3Z" fill="#e6e6e6"/><circle cx="4.5" cy="3" r="1.5" fill="#4d4d4d"/><circle cx="4.5" cy="3" r="0.6" fill="#e6e6e6"/></svg>
<svg style="left:740.5px;top:371px" width="9" height="6" viewBox="0 0 9 6"><path d="M0.2 3C2 0 7 0 8.8 3C7 6 2 6 0.2 3Z" fill="#e6e6e6"/><circle cx="4.5" cy="3" r="1.5" fill="#4d4d4d"/><circle cx="4.5" cy="3" r="0.6" fill="#e6e6e6"/></svg>

<!-- row1 -->
<svg style="left:756.5px;top:289px" width="3" height="5" viewBox="0 0 3 5"><path d="M0.5 0.5L2.4 2.5L0.5 4.5" fill="none" stroke="#c8c8c8" stroke-width="0.8"/></svg>
<svg style="left:762px;top:288px" width="10" height="7" viewBox="0 0 10 7"><path d="M0.300000000000004 0.6H3.4L4.2 1.6H9.4V6.6H0.3Z" fill="#e2e2e2"/></svg>
<div class="t" style="left:778px;top:286.500px;font-size:7.2px;color:#f2f2f2">组 1 拷贝</div>
<!-- row2 -->
<svg style="left:756px;top:305.500px" width="5" height="3" viewBox="0 0 5 3"><path d="M0.5 0.5L2.5 2.4L4.5 0.5" fill="none" stroke="#c8c8c8" stroke-width="0.8"/></svg>
<svg style="left:762px;top:303px" width="10" height="7" viewBox="0 0 10 7"><path d="M0.3 0.6H3.4L4.2 1.6H9.4V2.8H2.4L1.2 6.6H0.3Z" fill="#e2e2e2"/><path d="M2.8 3.2H9.8L8.8 6.6H1.6Z" fill="#e2e2e2"/></svg>
<div class="t" style="left:778px;top:302px;font-size:7.2px;color:#e2e2e2">组 1</div>
<!-- row3 -->
<svg style="left:767.600px;top:323.800px" width="4" height="5" viewBox="0 0 5 6"><path d="M4 0.6V3.4H1.4" fill="none" stroke="#c0c0c0" stroke-width="0.9"/><path d="M0 3.400L2 1.800V5Z" fill="#c0c0c0"/></svg>
<svg style="left:774.4px;top:316.300px" width="14.300" height="18.800" viewBox="0 0 14.300 18.800"><rect width="14.300" height="18.800" fill="#2c2c2c"/><rect x="0.8" y="0.8" width="12.700" height="17.200" fill="#f2f2f2"/><g fill="#d4d4d4"><rect x="0.800" y="0.800" width="1.600" height="1.600"/><rect x="4" y="0.800" width="1.600" height="1.600"/><rect x="7.200" y="0.800" width="1.600" height="1.600"/><rect x="10.400" y="0.800" width="1.600" height="1.600"/><rect x="2.400" y="2.400" width="1.600" height="1.600"/><rect x="5.600" y="2.400" width="1.600" height="1.600"/><rect x="8.800" y="2.400" width="1.600" height="1.600"/><rect x="12" y="2.400" width="1.500" height="1.600"/></g>
<rect x="0.800" y="4.600" width="12.700" height="13.400" fill="#2a14d0"/><rect x="0.800" y="12" width="3.400" height="6" fill="#c0186c"/><rect x="6.400" y="4.600" width="4.600" height="5.400" fill="#f02a28"/><rect x="8.600" y="4.600" width="2.600" height="2.400" fill="#f88430"/><rect x="11" y="4.600" width="2.500" height="6" fill="#7a34b0"/><rect x="3" y="6.600" width="1.600" height="3.600" fill="#22d8b0"/><rect x="3.600" y="12.600" width="1.400" height="3.600" fill="#24c0b8"/><rect x="5.600" y="10" width="4" height="3" fill="#2010ec"/>
<rect x="7.100" y="10.700" width="7.200" height="8.100" fill="#2c2c2c"/><path d="M8.600 12.200H11.400L12.800 13.600V17.400H8.600Z" fill="#f0f0f0"/><rect x="8" y="14.800" width="2.600" height="2.600" fill="#2c2c2c"/><rect x="8.400" y="15.200" width="1.800" height="1.800" fill="#f0f0f0"/></svg>
<div class="t" style="left:793.5px;top:321.500px;font-size:7.2px;color:#e2e2e2">矢量智能对象</div>
<!-- row4 -->
<svg style="left:764.700px;top:340.600px" width="14.300" height="18" viewBox="0 0 14.300 18"><rect width="14.300" height="18" fill="#2c2c2c"/><rect x="0.800" y="0.800" width="12.700" height="16.400" fill="#e4e4e4"/><rect x="2.400" y="2.400" width="9.500" height="13" fill="#f6f6f6"/><rect x="7.200" y="11" width="7.100" height="7" fill="#3a3a3a"/><rect x="9" y="12.600" width="3.600" height="3.600" fill="none" stroke="#f0f0f0" stroke-width="0.800"/><g fill="#f0f0f0"><rect x="8.100" y="11.700" width="1.700" height="1.700"/><rect x="11.800" y="11.700" width="1.700" height="1.700"/><rect x="8.100" y="15.400" width="1.700" height="1.700"/><rect x="11.800" y="15.400" width="1.700" height="1.700"/></g></svg>
<div class="t" style="left:784.5px;top:345.500px;font-size:7.2px;color:#e2e2e2;text-decoration:underline;text-underline-offset:1px">椭圆 1</div>
<!-- row5 -->
<div class="a" style="left:756px;top:364.500px;width:14px;height:18px;background:#fff;border:0.5px solid #777"></div>
<div class="t" style="left:775px;top:369px;font-size:7.2px;color:#e2e2e2">背景</div>
<svg style="left:874px;top:369.500px" width="7" height="9" viewBox="0 0 7 9"><path d="M2 4V2.600000000000001C2 0.6 5 0.6 5 2.6V4" fill="none" stroke="#d8d8d8" stroke-width="0.9"/><rect x="0.6" y="3.8" width="5.8" height="4.6" rx="0.6" fill="none" stroke="#d8d8d8" stroke-width="0.9"/><rect x="3" y="5.2" width="1" height="1.8" fill="#d8d8d8"/></svg>
<!-- bottom bar -->
<div class="a" style="left:736px;top:468px;width:164px;height:13px;background:#535353"></div>
<div class="a" style="left:736px;top:479px;width:164px;height:2px;background:#4a4a4a"></div>
<svg style="left:779.5px;top:472px" width="9" height="5" viewBox="0 0 9 5"><g fill="none" stroke="#8c8c8c" stroke-width="0.9"><rect x="0.5" y="0.8" width="4.4" height="3.2" rx="1.6"/><rect x="4.100000000000001" y="0.8" width="4.4" height="3.2" rx="1.6"/></g></svg>
<div class="t" style="left:796.5px;top:469px;font-size:8.6px;font-style:italic;color:#e0e0e0;letter-spacing:-0.3px">fx</div>
<svg style="left:812px;top:470.500px" width="9" height="7" viewBox="0 0 9 7"><rect x="0.2" y="0.2" width="8.4" height="6.4" rx="0.6" fill="#dadada"/><circle cx="4.4" cy="3.4" r="1.9" fill="#535353"/></svg>
<svg style="left:828px;top:470px" width="8" height="8" viewBox="0 0 8 8"><circle cx="4" cy="4" r="3.3" fill="none" stroke="#dadada" stroke-width="0.9"/><path d="M6.4 1.6A3.3 3.3 0 0 0 1.6 6.4Z" fill="#dadada"/></svg>
<svg style="left:843.5px;top:470.500px" width="9" height="7" viewBox="0 0 9 7"><path d="M0.3 0.400000000000002H3.2L4 1.4H8.6V6.6H0.3Z" fill="#dadada"/></svg>
<svg style="left:859px;top:470px" width="8" height="8" viewBox="0 0 8 8"><path d="M0.6 0.6H7.2V5L4.8 7.4H0.6Z" fill="none" stroke="#dadada" stroke-width="0.9"/><path d="M4.6 7.4V4.800000000000001H7.2Z" fill="#dadada"/></svg>
<svg style="left:875.5px;top:469.500px" width="7" height="9" viewBox="0 0 7 9"><path d="M0.2 1.6H6.8M2.4 1.4V0.4H4.6V1.4" fill="none" stroke="#dadada" stroke-width="0.9"/><path d="M0.8 2.400000000000002H6.2L5.8 8.6H1.2Z" fill="#dadada"/></svg>
<div class="a" style="left:899px;top:44px;width:1px;height:437px;background:#444"></div>
<div class="a" style="left:712px;top:43px;width:188px;height:1px;background:#393939"></div>


<!-- arrows -->
<svg style="left:0;top:0" width="900" height="481" viewBox="0 0 900 481">
<rect x="729.7" y="298.2" width="161.2" height="62" fill="none" stroke="#e8202c" stroke-width="1.6"/>
<g fill="#e8202c">
<path d="M680.0 247.7L768.1 286.5L765.1 290.0L781.3 289.2L770.3 277.2L770.0 281.9Z"/>
<path d="M654.0 386.5L722.8 354.8L723.4 359.3L734.2 346.3L717.3 347.2L720.6 350.3Z"/>
</g>
</svg>

</body></html>
